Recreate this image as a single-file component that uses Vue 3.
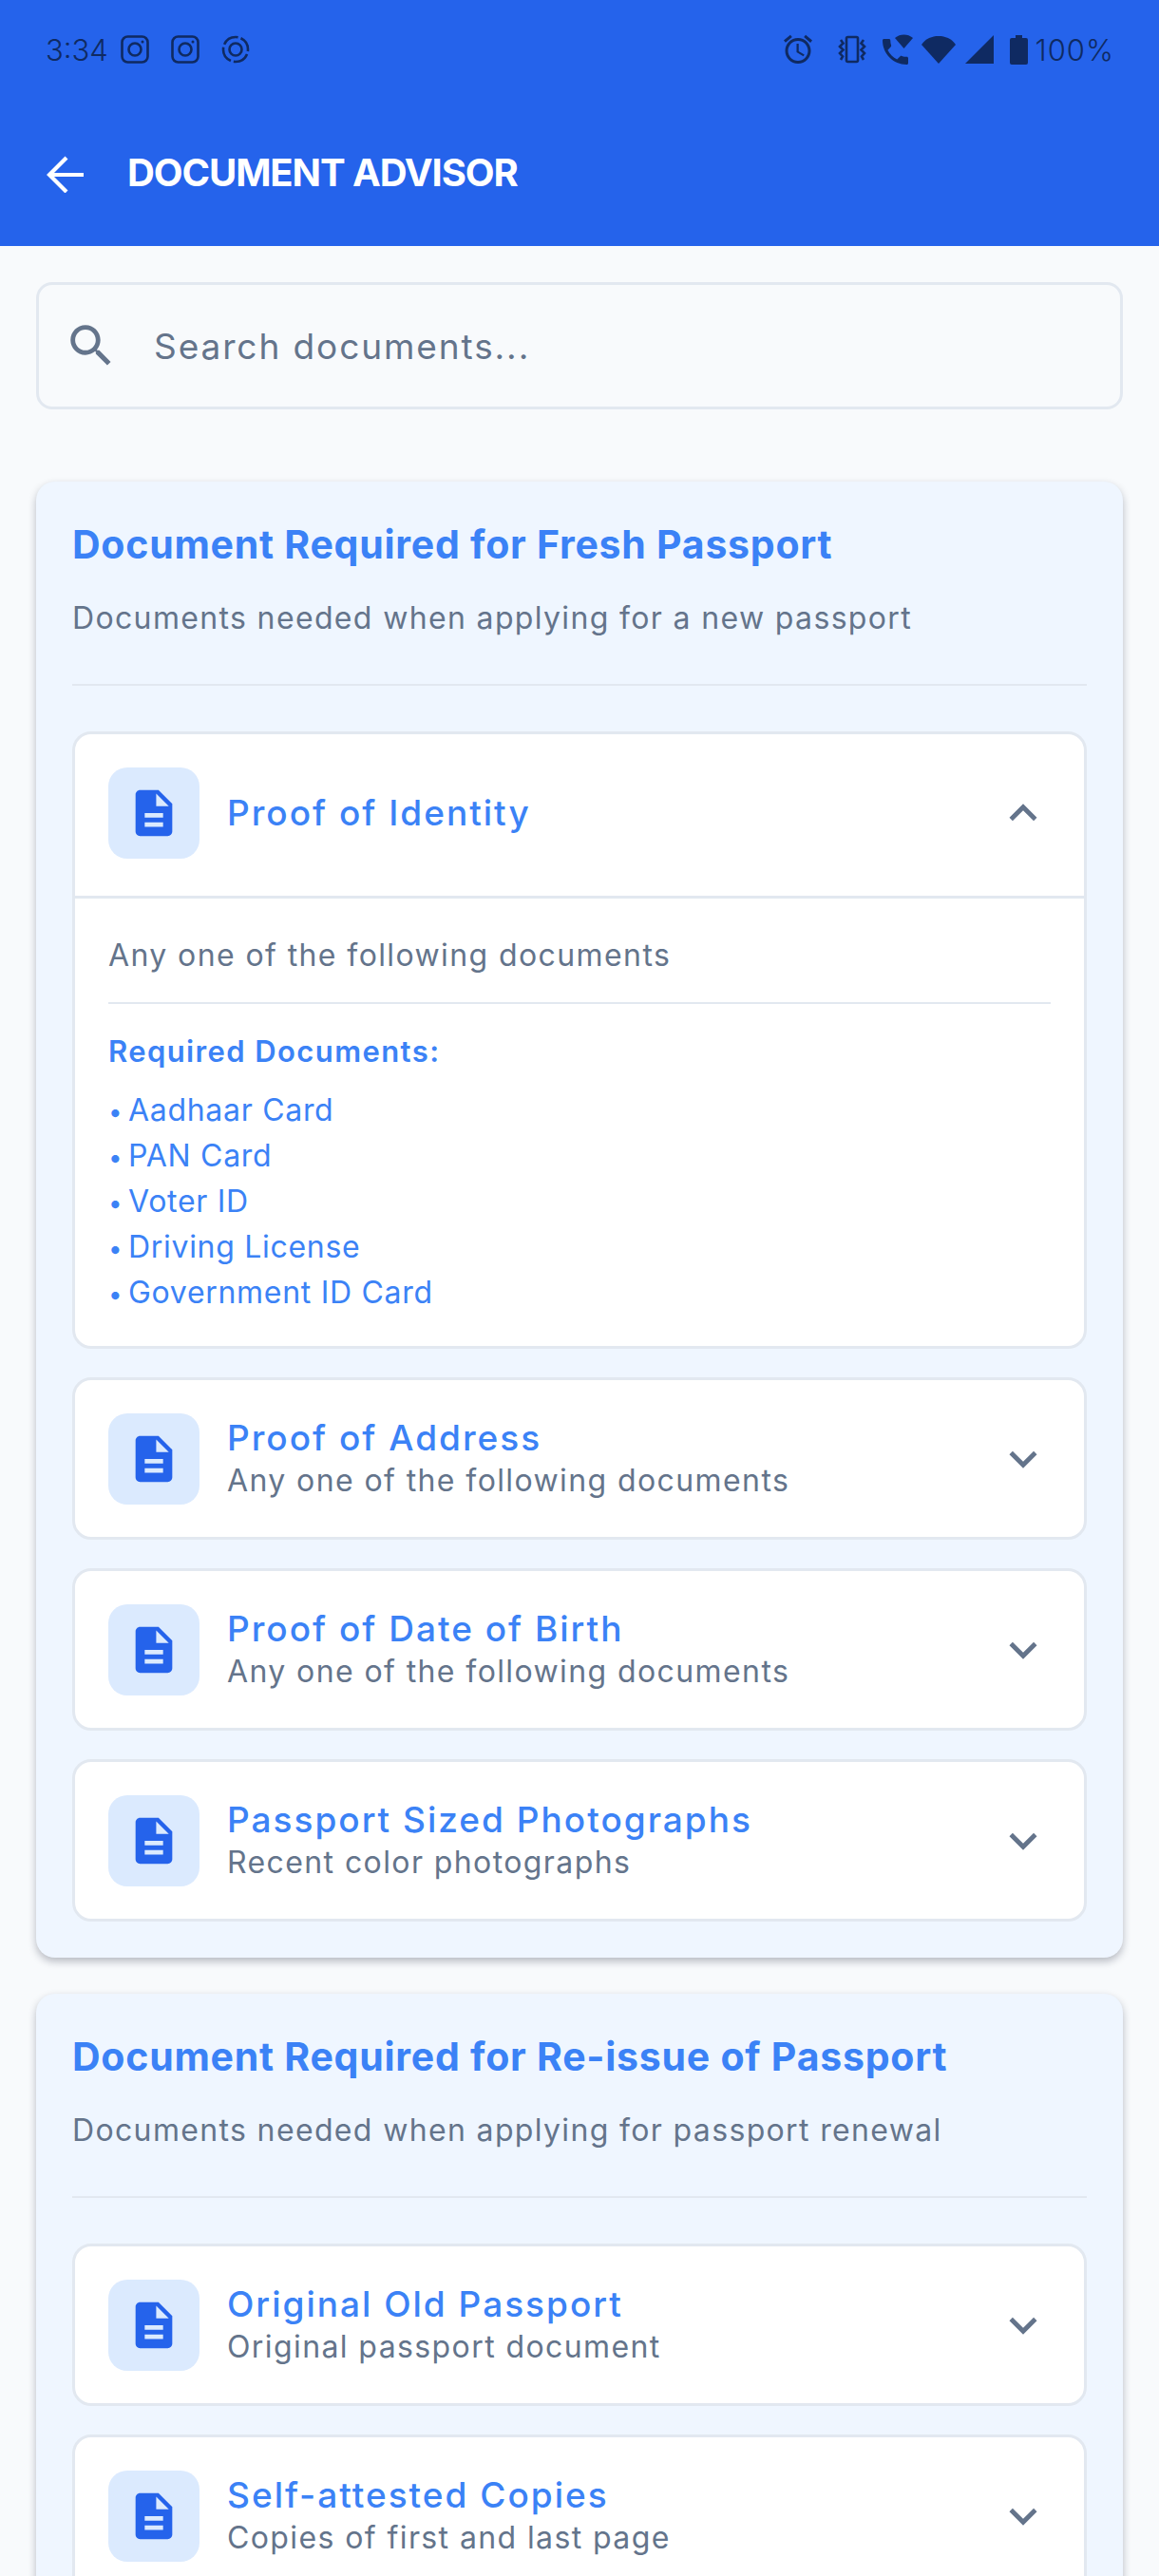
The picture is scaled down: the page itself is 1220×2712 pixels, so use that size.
<script setup>
const docPath = 'M14 2H6c-1.1 0-1.99.9-1.99 2L4 20c0 1.1.89 2 1.99 2H18c1.1 0 2-.9 2-2V8l-6-6zm2 16H8v-2h8v2zm0-4H8v-2h8v2zm-3-5V3.5L18.5 9H13z'
const downPath = 'M7.41 8.59 12 13.17l4.59-4.58L18 10l-6 6-6-6 1.41-1.41z'
const upPath = 'M12 8l-6 6 1.41 1.41L12 10.83l4.59 4.58L18 14z'

const sections = [
  {
    title: 'Document Required for Fresh Passport',
    sub: 'Documents needed when applying for a new passport',
    items: [
      {
        title: 'Proof of Identity',
        sub: 'Any one of the following documents',
        open: true,
        docs: ['Aadhaar Card', 'PAN Card', 'Voter ID', 'Driving License', 'Government ID Card']
      },
      { title: 'Proof of Address', sub: 'Any one of the following documents' },
      { title: 'Proof of Date of Birth', sub: 'Any one of the following documents' },
      { title: 'Passport Sized Photographs', sub: 'Recent color photographs' }
    ]
  },
  {
    title: 'Document Required for Re-issue of Passport',
    sub: 'Documents needed when applying for passport renewal',
    items: [
      { title: 'Original Old Passport', sub: 'Original passport document' },
      { title: 'Self-attested Copies', sub: 'Copies of first and last page' }
    ]
  }
]
</script>

<template>
  <div class="screen">
    <header class="appbar">
      <div class="status">
        <span class="time">3:34</span>
        <svg class="insta first" viewBox="0 0 30 30" fill="none" stroke="currentColor" stroke-width="2.6">
          <rect x="1.500" y="1.500" width="27" height="27" rx="6" />
          <circle cx="15" cy="15" r="6.500" />
          <circle cx="23" cy="7" r="1.500" fill="currentColor" stroke="none" />
        </svg>
        <svg class="insta" viewBox="0 0 30 30" fill="none" stroke="currentColor" stroke-width="2.6">
          <rect x="1.500" y="1.500" width="27" height="27" rx="6" />
          <circle cx="15" cy="15" r="6.500" />
          <circle cx="23" cy="7" r="1.500" fill="currentColor" stroke="none" />
        </svg>
        <svg class="insta" viewBox="0 0 30 30" fill="none" stroke="currentColor" stroke-width="2.6">
          <circle cx="15" cy="15" r="13" stroke-dasharray="17.500 3" stroke-dashoffset="-5" />
          <circle cx="15" cy="15" r="6.500" />
        </svg>
        <span class="spacer"></span>
        <svg class="ic-alarm" viewBox="0 0 24 24" fill="currentColor">
          <path d="M22 5.72l-4.6-3.86-1.29 1.53 4.6 3.86L22 5.72zM7.88 3.39L6.6 1.86 2 5.71l1.29 1.53 4.59-3.85zM12.5 8H11v6l4.75 2.85.75-1.23-4-2.37V8zM12 4c-4.97 0-9 4.03-9 9s4.02 9 9 9c4.97 0 9-4.03 9-9s-4.03-9-9-9zm0 16c-3.87 0-7-3.13-7-7s3.13-7 7-7 7 3.13 7 7-3.13 7-7 7z" />
        </svg>
        <svg class="ic-vibrate" viewBox="0 0 30 30" fill="none" stroke="currentColor" stroke-width="2.6">
          <rect x="9" y="2" width="12" height="26" rx="1.500" />
          <path d="M3 5l2.500 3.500L2 12l3.500 3.500L2 19l3 3.500L3 26M27 5l-2.500 3.500L28 12l-3.500 3.500L28 19l-3 3.500 2 3.500" />
        </svg>
        <svg class="ic-call" viewBox="0 0 32 32" fill="currentColor">
          <path d="M20 15.5c-1.25 0-2.45-.2-3.57-.57-.35-.11-.74-.03-1.02.24l-2.2 2.2c-2.83-1.44-5.15-3.75-6.59-6.59l2.2-2.21c.28-.26.36-.65.25-1C8.7 6.45 8.5 5.25 8.5 4c0-.55-.45-1-1-1H4c-.55 0-1 .45-1 1 0 9.39 7.61 17 17 17 .55 0 1-.45 1-1v-3.5c0-.55-.45-1-1-1z" transform="translate(-4.5 .5) scale(1.5)" />
          <path d="M13 4c3-2.500 6-3.500 9.500-3.500S29 1.500 32 4l-9.500 11z" />
        </svg>
        <svg class="ic-wifi" viewBox="0 0 36 30" fill="currentColor">
          <path d="M0 10C4.500 3.500 11 1 18 1s13.500 2.500 18 9L18 30 0 10z" />
        </svg>
        <svg class="ic-signal" viewBox="0 0 30 30" fill="currentColor">
          <path d="M30 0v30H0z" />
        </svg>
        <svg class="ic-battery" viewBox="0 0 19 31" fill="currentColor">
          <path d="M6 0h7v3h4a2 2 0 0 1 2 2v24a2 2 0 0 1-2 2H2a2 2 0 0 1-2-2V5a2 2 0 0 1 2-2h4z" />
        </svg>
        <span class="pct">100%</span>
      </div>
      <div class="toolbar">
        <svg class="back" viewBox="0 -2 40 42" fill="none" stroke="#fff" stroke-width="4.2">
          <path d="M40 21H4M22 3 4 21l18 18" />
        </svg>
        <h1>DOCUMENT ADVISOR</h1>
      </div>
    </header>

    <main class="content">
      <label class="search">
        <svg class="search-ic" viewBox="0 0 24 24" fill="currentColor">
          <path d="M15.5 14h-.79l-.28-.27C15.41 12.59 16 11.11 16 9.500 16 5.910 13.090 3 9.500 3S3 5.910 3 9.500 5.910 16 9.500 16c1.610 0 3.090-.59 4.230-1.570l.27.28v.79l5 4.990L20.490 19l-4.990-5zm-6 0C7.010 14 5 11.990 5 9.500S7.010 5 9.500 5 14 7.010 14 9.500 11.990 14 9.500 14z" />
        </svg>
        <input type="text" placeholder="Search documents..." />
      </label>

      <section v-for="sec in sections" :key="sec.title" class="card">
        <h2>{{ sec.title }}</h2>
        <p class="card-sub">{{ sec.sub }}</p>
        <div class="rule"></div>

        <div class="list">
          <article v-for="item in sec.items" :key="item.title" class="item">
            <div class="item-head" :class="{ open: item.open }">
              <div class="doc-box">
                <svg viewBox="0 0 24 24" fill="currentColor"><path :d="docPath" /></svg>
              </div>
              <div class="item-text">
                <h3>{{ item.title }}</h3>
                <p v-if="!item.open">{{ item.sub }}</p>
              </div>
              <svg class="chev" viewBox="0 0 24 24" fill="currentColor">
                <path :d="item.open ? upPath : downPath" />
              </svg>
            </div>
            <div v-if="item.open" class="item-body">
              <p class="body-sub">{{ item.sub }}</p>
              <div class="body-rule"></div>
              <h4>Required Documents:</h4>
              <ul>
                <li v-for="d in item.docs" :key="d"><span class="dot">•</span>{{ d }}</li>
              </ul>
            </div>
          </article>
        </div>
      </section>
    </main>
  </div>
</template>

<style>
html, body {
  margin: 0;
  background: #f8fafc;
}
</style>

<style scoped>
.screen {
  height: 2712px;
  overflow: hidden;
  background: #f8fafc;
  font-family: Inter, "Liberation Sans", sans-serif;
}

/* top bar */
.appbar {
  height: 259px;
  background: #2563eb;
  color: #0f2a62;
}
.status {
  display: flex;
  align-items: center;
  height: 104px;
  padding: 0 47px 0 48px;
  box-sizing: border-box;
}
.time {
  width: 66px;
  font-size: 31px;
  font-weight: 300;
}
.insta {
  width: 30px;
  height: 30px;
  margin-right: 23px;
}
.insta.first {
  margin-left: 13px;
}
.spacer {
  flex: 1;
}
.ic-alarm {
  width: 36px;
  height: 36px;
  margin-right: 24px;
}
.ic-vibrate {
  width: 30px;
  height: 30px;
  margin-right: 17px;
}
.ic-call {
  width: 32px;
  height: 32px;
  margin-right: 9px;
}
.ic-wifi {
  width: 36px;
  height: 30px;
  margin-right: 10px;
}
.ic-signal {
  width: 30px;
  height: 30px;
  margin-right: 17px;
}
.ic-battery {
  width: 19px;
  height: 31px;
  margin-right: 7px;
}
.pct {
  font-size: 31px;
  font-weight: 300;
  letter-spacing: 1px;
}
.toolbar {
  display: flex;
  align-items: center;
  height: 155px;
  padding-left: 48px;
}
.back {
  width: 40px;
  height: 42px;
  margin-right: 46px;
}
h1 {
  margin: 0;
  color: #fff;
  font-size: 40px;
  font-weight: 700;
  letter-spacing: -1.1px;
}

/* search */
.content {
  padding: 38px 38px 0;
}
.search {
  display: flex;
  align-items: center;
  height: 134px;
  box-sizing: border-box;
  border: 3px solid #e2e8f0;
  border-radius: 17px;
  padding: 0 26px;
  color: #64748b;
}
.search-ic {
  width: 58px;
  height: 58px;
  flex: none;
  margin-right: 37px;
}
.search input {
  flex: 1;
  min-width: 0;
  padding: 0;
  border: 0;
  outline: 0;
  background: transparent;
  font: 400 37px Inter, "Liberation Sans", sans-serif;
  letter-spacing: 1.9px;
  color: #64748b;
}
.search input::placeholder {
  color: #64748b;
  opacity: 1;
}

/* sections */
.card {
  margin-top: 76px;
  padding: 38px;
  background: #eff6ff;
  border-radius: 20px;
  box-shadow: 0 4px 9px rgba(15, 23, 42, 0.28);
}
.card + .card {
  margin-top: 38px;
}
h2 {
  margin: 0;
  height: 56px;
  line-height: 56px;
  font-size: 41px;
  font-weight: 700;
  letter-spacing: 0.75px;
  color: #3b82f6;
}
.card-sub {
  margin: 28px 0 0;
  height: 44px;
  line-height: 44px;
  font-size: 32px;
  letter-spacing: 1.35px;
  color: #64748b;
}
.rule {
  height: 2px;
  margin: 47px 0 48px;
  background: #e2e8f0;
}
.list {
  display: flex;
  flex-direction: column;
  gap: 30px;
}
.item {
  background: #fff;
  border: 3px solid #e2e8f0;
  border-radius: 20px;
  overflow: hidden;
}
.item-head {
  display: flex;
  align-items: center;
  height: 165px;
  padding: 0 35px;
}
.item-head.open {
  height: 166px;
  padding-bottom: 4px;
  border-bottom: 3px solid #e2e8f0;
}
.doc-box {
  display: flex;
  align-items: center;
  justify-content: center;
  flex: none;
  width: 96px;
  height: 96px;
  border-radius: 20px;
  background: #dbeafe;
  color: #2563eb;
  margin-right: 29px;
}
.doc-box svg {
  width: 58px;
  height: 58px;
}
.item-text {
  flex: 1;
  min-width: 0;
}
h3 {
  margin: 0;
  line-height: 46px;
  font-size: 37px;
  font-weight: 500;
  letter-spacing: 2px;
  color: #3b82f6;
}
.item-text p {
  margin: 0;
  line-height: 44px;
  font-size: 32px;
  letter-spacing: 1.4px;
  color: #64748b;
}
.chev {
  flex: none;
  width: 58px;
  height: 58px;
  color: #64748b;
}
.item-body {
  padding: 38px 35px 32px;
}
.body-sub {
  margin: 0;
  line-height: 44px;
  font-size: 32px;
  letter-spacing: 1.4px;
  color: #64748b;
}
.body-rule {
  height: 2px;
  margin: 27px 0 30px;
  background: #e2e8f0;
}
h4 {
  margin: 0 0 18px;
  line-height: 40px;
  font-size: 31px;
  font-weight: 600;
  letter-spacing: 1.4px;
  color: #3b82f6;
}
ul {
  list-style: none;
  margin: 0;
  padding: 0;
}
li {
  line-height: 48px;
  font-size: 32px;
  letter-spacing: 0.7px;
  color: #3b82f6;
}
.dot {
  display: inline-block;
  width: 21px;
  font-size: 26px;
  line-height: 1;
}
</style>
